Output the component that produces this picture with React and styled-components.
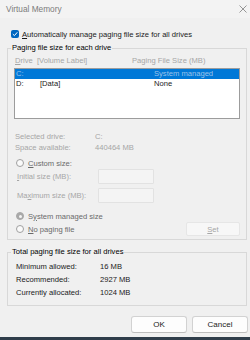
import React from 'react';
import styled, { createGlobalStyle } from 'styled-components';

const GlobalStyle = createGlobalStyle`
  html, body {
    margin: 0;
    padding: 0;
    background: #f0f0f0;
  }
  body {
    font-family: "Liberation Sans", Arial, sans-serif;
    font-size: 7.6px;
    overflow: hidden;
  }
`;

const App = () => {
  return (
    <Window>
      <GlobalStyle />
      <TitleBar>
        <span>Virtual Memory</span>
        <svg width="8" height="8" viewBox="0 0 8 8">
          <path d="M0.5 0.5 L7.5 7.5 M7.5 0.5 L0.5 7.5" stroke="#8a8a8a" strokeWidth="0.9" fill="none" />
        </svg>
      </TitleBar>

      <Content>
        <CheckRow>
          <Checkbox>
            <svg width="6" height="6" viewBox="0 0 6 6">
              <path d="M0.8 3.1 L2.4 4.6 L5.3 1.3" stroke="#fff" strokeWidth="1" fill="none" />
            </svg>
          </Checkbox>
          <span><u>A</u>utomatically manage paging file size for all drives</span>
        </CheckRow>

        <Group>
          <Legend>Paging file size for each drive</Legend>
          <HeaderRow>
            <span><u>D</u>rive  [Volume Label]</span>
            <span>Paging File Size (MB)</span>
          </HeaderRow>
          <ListBox>
            <ListRow $selected>
              <span>C:</span>
              <span></span>
              <span>System managed</span>
            </ListRow>
            <ListRow>
              <span>D:</span>
              <span>[Data]</span>
              <span>None</span>
            </ListRow>
          </ListBox>

          <InfoRow $top={12}>
            <span>Selected drive:</span>
            <span>C:</span>
          </InfoRow>
          <InfoRow>
            <span>Space available:</span>
            <span>440464 MB</span>
          </InfoRow>

          <RadioRow $top={5}>
            <Radio />
            <RadioLabel><u>C</u>ustom size:</RadioLabel>
          </RadioRow>
          <SizeRow $top={1}>
            <span><u>I</u>nitial size (MB):</span>
            <SizeInput />
          </SizeRow>
          <SizeRow $top={4}>
            <span>Ma<u>x</u>imum size (MB):</span>
            <SizeInput />
          </SizeRow>

          <RadioRow $top={8}>
            <Radio $checked />
            <RadioLabel>S<u>y</u>stem managed size</RadioLabel>
          </RadioRow>
          <SetRow>
            <RadioRow>
              <Radio />
              <RadioLabel><u>N</u>o paging file</RadioLabel>
            </RadioRow>
            <SetButton><u>S</u>et</SetButton>
          </SetRow>
        </Group>

        <Group $top={7} $bottom={6}>
          <Legend>Total paging file size for all drives</Legend>
          <TotalRow>
            <span>Minimum allowed:</span>
            <span>16 MB</span>
          </TotalRow>
          <TotalRow>
            <span>Recommended:</span>
            <span>2927 MB</span>
          </TotalRow>
          <TotalRow>
            <span>Currently allocated:</span>
            <span>1024 MB</span>
          </TotalRow>
        </Group>

        <ButtonRow>
          <DialogButton>OK</DialogButton>
          <DialogButton>Cancel</DialogButton>
        </ButtonRow>
      </Content>

      <BottomEdge />
    </Window>
  );
};

const Window = styled.div`
  width: 250px;
  height: 340px;
  display: flex;
  flex-direction: column;
  background: #f0f0f0;
`;

const TitleBar = styled.div`
  height: 18px;
  flex-shrink: 0;
  display: flex;
  align-items: center;
  justify-content: space-between;
  padding: 0 3px 0 6px;
  background: #f3f3f3;
  color: #7c7c7c;
  font-size: 8.3px;
`;

const Content = styled.div`
  display: flex;
  flex-direction: column;
  padding: 0 3px 0 7px;
`;

const CheckRow = styled.div`
  display: flex;
  align-items: center;
  gap: 3px;
  height: 10px;
  margin-top: 11px;
  padding-left: 4px;
  color: #1a1a1a;
  white-space: nowrap;
`;

const Checkbox = styled.div`
  width: 8px;
  height: 8px;
  border-radius: 2px;
  background: #0067c0;
  display: flex;
  align-items: center;
  justify-content: center;
`;

const Group = styled.fieldset`
  margin: ${p => p.$top || 4}px 0 0;
  padding: 3px 6px ${p => p.$bottom || 3}px 7px;
  border: 1px solid #d8d8d8;
  min-width: 0;
  display: flex;
  flex-direction: column;
`;

const Legend = styled.legend`
  padding: 0 1px;
  margin-left: -4px;
  line-height: 10px;
  color: #000;
  white-space: nowrap;
`;

const HeaderRow = styled.div`
  display: grid;
  grid-template-columns: 117px 1fr;
  height: 10px;
  line-height: 10px;
  color: #a6a6a6;
  white-space: pre;
`;

const ListBox = styled.div`
  margin: 2px 0 0 -1px;
  height: 51px;
  box-sizing: border-box;
  border: 1px solid #9c9c9c;
  background: #fff;
`;

const ListRow = styled.div`
  display: grid;
  grid-template-columns: 24px 114px 1fr;
  height: 10px;
  line-height: 10px;
  padding-left: 1px;
  background: ${p => (p.$selected ? '#0078d7' : 'transparent')};
  color: ${p => (p.$selected ? '#9cc3ea' : '#1a1a1a')};
`;

const InfoRow = styled.div`
  display: grid;
  grid-template-columns: 80px 1fr;
  height: 11px;
  line-height: 11px;
  margin-top: ${p => p.$top || 0}px;
  color: #a6a6a6;
`;

const RadioRow = styled.div`
  display: flex;
  align-items: center;
  gap: 4px;
  height: 10px;
  margin-top: ${p => p.$top || 0}px;
  padding-left: 1px;
`;

const Radio = styled.div`
  width: 8px;
  height: 8px;
  box-sizing: border-box;
  border-radius: 50%;
  border: 1px solid ${p => (p.$checked ? '#a9a9a9' : '#a0a0a0')};
  background: ${p => (p.$checked ? '#a9a9a9' : '#fafafa')};
  display: flex;
  align-items: center;
  justify-content: center;

  &::after {
    content: '';
    display: ${p => (p.$checked ? 'block' : 'none')};
    width: 3px;
    height: 3px;
    border-radius: 50%;
    background: #f4f4f4;
  }
`;

const RadioLabel = styled.span`
  color: #6a6a6a;
  white-space: nowrap;
`;

const SizeRow = styled.div`
  display: grid;
  grid-template-columns: 81px 56px;
  align-items: center;
  height: 15px;
  margin-top: ${p => p.$top || 0}px;
  padding-left: 2px;
  color: #a6a6a6;
`;

const SizeInput = styled.div`
  height: 15px;
  box-sizing: border-box;
  border: 1px solid #e2e2e2;
  background: #f4f4f4;
  border-radius: 1px;
`;

const SetRow = styled.div`
  display: flex;
  align-items: center;
  justify-content: space-between;
  height: 14px;
  margin-top: 1px;
`;

const SetButton = styled.div`
  width: 54px;
  height: 14px;
  box-sizing: border-box;
  border: 1px solid #e6e6e6;
  border-radius: 2px;
  background: #f7f7f7;
  color: #a6a6a6;
  display: flex;
  align-items: center;
  justify-content: center;
`;

const TotalRow = styled.div`
  display: grid;
  grid-template-columns: 84px 1fr;
  height: 13px;
  line-height: 13px;
  padding-left: 1px;
  color: #1a1a1a;
`;

const ButtonRow = styled.div`
  display: flex;
  justify-content: flex-end;
  gap: 5px;
  margin: 10px -1px 0 0;
`;

const DialogButton = styled.div`
  width: 56px;
  height: 17px;
  box-sizing: border-box;
  border: 1px solid #d2d2d2;
  border-bottom-color: #bdbdbd;
  border-radius: 3px;
  background: #fdfdfd;
  color: #1a1a1a;
  font-size: 8px;
  display: flex;
  align-items: center;
  justify-content: center;
`;

const BottomEdge = styled.div`
  margin-top: auto;
  height: 3px;
  flex-shrink: 0;
  background: #2f3d4a;
`;

export default App;
